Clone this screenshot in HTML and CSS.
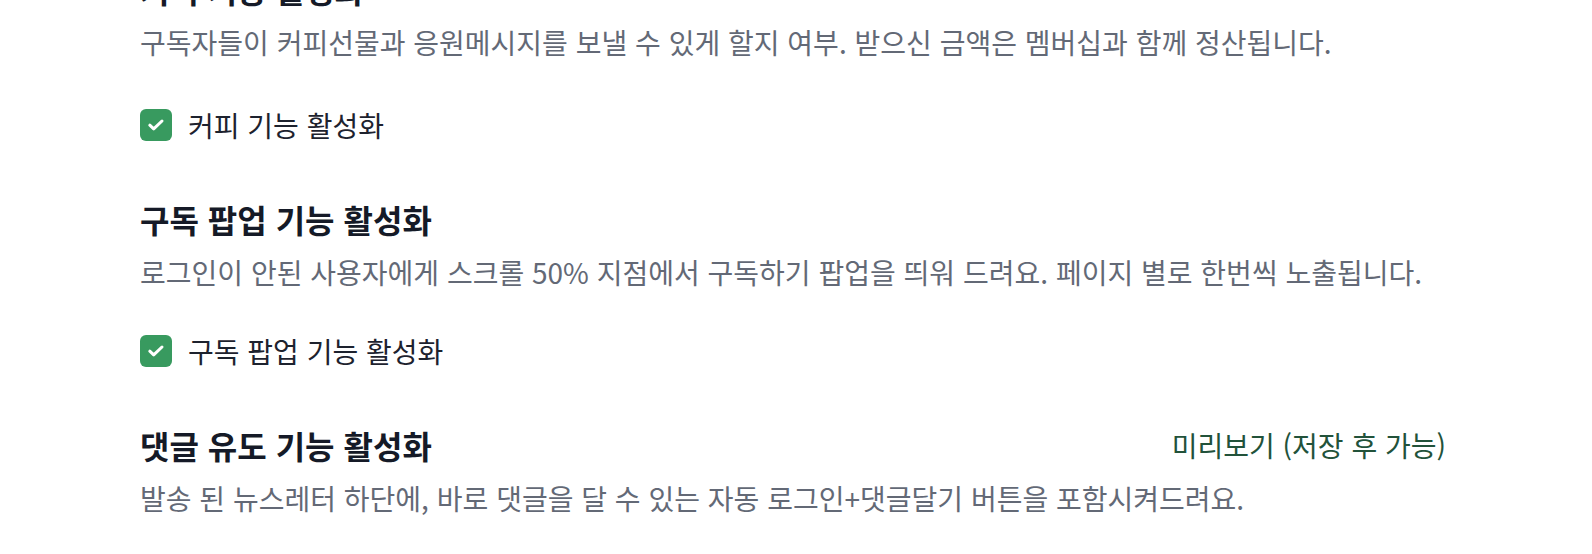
FILE: index.html
```html
<!DOCTYPE html>
<html lang="ko">
<head>
    <meta charset="UTF-8">
    <title>뉴스레터 설정</title>
    <link rel="stylesheet" href="styles.css">
</head>
<body>
<div class="settings">
    <div class="section section-first">
        <div class="section-head">
            <h3>커피 기능 활성화</h3>
        </div>
        <p class="section-desc">구독자들이 커피선물과 응원메시지를 보낼 수 있게 할지 여부. 받으신 금액은 멤버십과 함께 정산됩니다.</p>
        <label class="check-row">
            <span class="check-box">
                <svg viewBox="0 0 20 20" width="20" height="20"><path d="M3.8 10.2l3.9 3.7 8.3-7.9" fill="none" stroke="#fff" stroke-width="3" stroke-linecap="round" stroke-linejoin="round"/></svg>
            </span>
            <span>커피 기능 활성화</span>
        </label>
    </div>
    <div class="section">
        <div class="section-head">
            <h3>구독 팝업 기능 활성화</h3>
        </div>
        <p class="section-desc">로그인이 안된 사용자에게 스크롤 50% 지점에서 구독하기 팝업을 띄워 드려요. 페이지 별로 한번씩 노출됩니다.</p>
        <label class="check-row">
            <span class="check-box">
                <svg viewBox="0 0 20 20" width="20" height="20"><path d="M3.8 10.2l3.9 3.7 8.3-7.9" fill="none" stroke="#fff" stroke-width="3" stroke-linecap="round" stroke-linejoin="round"/></svg>
            </span>
            <span>구독 팝업 기능 활성화</span>
        </label>
    </div>
    <div class="section">
        <div class="section-head">
            <h3>댓글 유도 기능 활성화</h3>
            <a class="preview" href="#">미리보기 (저장 후 가능)</a>
        </div>
        <p class="section-desc">발송 된 뉴스레터 하단에, 바로 댓글을 달 수 있는 자동 로그인+댓글달기 버튼을 포함시켜드려요.</p>
    </div>
</div>
</body>
</html>
```

FILE: styles.css
```css
*{
    margin:0;
    padding:0;
    box-sizing:border-box;
}
body{
    background:#fff;
    font-family:"Noto Sans CJK KR", sans-serif;
    overflow:hidden;
}
.settings{
    width:1306px;
    margin:-31px 0 0 140px;
}
.section{
    margin-bottom:54px;
}
.section-head{
    display:flex;
    justify-content:space-between;
    align-items:center;
    height:40px;
}
.section-head h3{
    font-size:32px;
    font-weight:700;
    line-height:40px;
    color:#151a27;
}
.preview{
    font-size:28px;
    line-height:40px;
    color:#22523a;
    text-decoration:none;
}
.section-desc{
    margin-top:13px;
    font-size:28px;
    line-height:40px;
    color:#636976;
}
.check-row{
    display:flex;
    align-items:center;
    gap:16px;
    height:40px;
    margin-top:39px;
    font-size:28px;
    color:#1d222e;
}
.section-first .check-row{
    margin-top:43px;
}
.check-box{
    display:flex;
    align-items:center;
    justify-content:center;
    width:32px;
    height:32px;
    border-radius:6px;
    background:#389a5f;
}
```
